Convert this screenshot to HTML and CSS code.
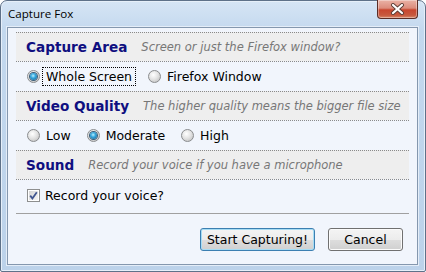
FILE: index.html
```html
<!DOCTYPE html>
<html>
<head>
<meta charset="utf-8">
<link rel="stylesheet" href="styles.css">
</head>
<body>
<div class="window">
  <div class="titlebar">
    <span class="title">Capture Fox</span>
    <div class="close">
      <svg width="15" height="12" viewBox="0 0 15 12">
        <path d="M3 2 L12 10 M12 2 L3 10" stroke="#5b3d36" stroke-width="4" stroke-linecap="round" fill="none"/>
        <path d="M3 2 L12 10 M12 2 L3 10" stroke="#ffffff" stroke-width="2.2" stroke-linecap="round" fill="none"/>
      </svg>
    </div>
  </div>
  <div class="client">
    <div class="sec-head">
      <span class="h">Capture Area</span>
      <span class="d">Screen or just the Firefox window?</span>
    </div>
    <div class="options">
      <div class="opt"><span class="radio on"><i></i></span><span class="lbl focus">Whole Screen</span></div>
      <div class="opt"><span class="radio"></span><span class="lbl">Firefox Window</span></div>
    </div>
    <div class="sec-head">
      <span class="h">Video Quality</span>
      <span class="d">The higher quality means the bigger file size</span>
    </div>
    <div class="options">
      <div class="opt"><span class="radio"></span><span class="lbl">Low</span></div>
      <div class="opt"><span class="radio on"><i></i></span><span class="lbl">Moderate</span></div>
      <div class="opt"><span class="radio"></span><span class="lbl">High</span></div>
    </div>
    <div class="sec-head">
      <span class="h">Sound</span>
      <span class="d">Record your voice if you have a microphone</span>
    </div>
    <div class="check-row">
      <span class="checkbox">
        <svg width="11" height="11" viewBox="0 0 11 11">
          <path d="M2.2 5.6 L4.4 8.4 L8.8 2.2" stroke="#40558f" stroke-width="1.8" fill="none"/>
        </svg>
      </span>
      <span class="lbl">Record your voice?</span>
    </div>
    <div class="sep"></div>
    <div class="buttons">
      <button class="btn default">Start Capturing!</button>
      <button class="btn cancel">Cancel</button>
    </div>
  </div>
</div>
</body>
</html>
```
FILE: styles.css
```css
html, body {
  margin: 0;
  padding: 0;
  background: #ffffff;
}
.window {
  width: 426px;
  height: 272px;
  box-sizing: border-box;
  border: 1px solid #5e7189;
  border-radius: 7px 7px 2px 2px;
  background: linear-gradient(to bottom, #d6e5f5 0, #c3d8ee 30px, #bcd2ea 100%);
  box-shadow: inset 0 0 0 1px #e6eff9;
  display: flex;
  flex-direction: column;
  font-family: "DejaVu Sans", Verdana, sans-serif;
}
.titlebar {
  height: 26px;
  display: flex;
  align-items: flex-start;
  padding: 0 7px 0 7px;
  flex: none;
}
.title {
  font-family: "Open Sans", "Noto Sans", sans-serif;
  font-size: 11.6px;
  color: #000;
  margin-top: 5px;
  line-height: 16px;
}
.close {
  margin-left: auto;
  margin-top: -1px;
  width: 41px;
  height: 19px;
  box-sizing: border-box;
  border: 1px solid #5a2d26;
  border-top: none;
  border-radius: 0 0 4px 4px;
  background: linear-gradient(to bottom, #eab2a6 0, #dc8c7c 45%, #c8462f 55%, #c75a3f 85%, #d98a6c 100%);
  box-shadow: inset 0 0 0 1px rgba(255,255,255,0.35);
  display: flex;
  align-items: center;
  justify-content: center;
}
.client {
  margin: 0 7px 0 6px;
  height: 238px;
  box-sizing: border-box;
  border: 1px solid #8497ae;
  box-shadow: 0 0 0 1px #e4edf8;
  background: #f1f5fc;
  padding: 4px 8px 0 8px;
  display: flex;
  flex-direction: column;
  flex: none;
}
.sec-head {
  border-top: 1px dotted #8a8a8a;
  height: 28px;
  background: #eeeeee;
  display: flex;
  align-items: center;
  padding-left: 10px;
  box-sizing: content-box;
}
.h {
  font-weight: bold;
  font-size: 13.6px;
  color: #0f0f80;
}
.d {
  margin-left: 14px;
  font-style: italic;
  font-size: 11.5px;
  color: #777777;
}
.options {
  border-top: 1px dotted #8a8a8a;
  height: 29px;
  display: flex;
  align-items: center;
  padding-left: 11px;
}
.opt {
  display: flex;
  align-items: center;
  margin-right: 12px;
}
.radio {
  width: 13px;
  height: 13px;
  box-sizing: border-box;
  border-radius: 50%;
  border: 1px solid #8a8c8e;
  background: radial-gradient(circle at 40% 35%, #ffffff 0, #e4e4e4 45%, #b9b9b9 100%);
  display: flex;
  align-items: center;
  justify-content: center;
  margin-right: 2px;
}
.radio i {
  width: 7px;
  height: 7px;
  border-radius: 50%;
  background: radial-gradient(circle at 45% 40%, #b8f0ff 0, #35a6dc 40%, #115a8c 100%);
  box-shadow: 0 0 0 1px #3a5d78;
}
.lbl {
  font-size: 12.5px;
  color: #000;
  border: 1px dotted transparent;
  padding: 1px 3px 1px 3px;
  line-height: 15px;
}
.lbl.focus {
  border-color: #000;
}
.check-row {
  border-top: 1px dotted #8a8a8a;
  height: 33px;
  display: flex;
  align-items: center;
  padding-left: 11px;
}
.check-row .lbl {
  padding-left: 5px;
  border: none;
  margin-top: -2px;
}
.checkbox {
  width: 13px;
  height: 13px;
  box-sizing: border-box;
  border: 1px solid #8e8f8f;
  background: linear-gradient(135deg, #cfcfcf 0, #eaeaea 60%, #f6f6f6 100%);
  box-shadow: inset 0 0 0 1px #ffffff;
  display: flex;
  align-items: center;
  justify-content: center;
  margin-top: -3px;
}
.sep {
  height: 1px;
  background: #a0a0a0;
  flex: none;
}
.buttons {
  display: flex;
  justify-content: flex-end;
  padding-top: 14px;
  padding-right: 6px;
  gap: 13px;
}
.btn {
  height: 23px;
  box-sizing: border-box;
  font-family: "DejaVu Sans", Verdana, sans-serif;
  font-size: 12.5px;
  color: #000;
  border: 1px solid #707070;
  border-radius: 3px;
  background: linear-gradient(to bottom, #f4f4f4 0, #ececec 50%, #dedede 50%, #d0d0d0 100%);
  box-shadow: inset 0 0 0 1px #fbfbfb;
  padding: 0;
  margin: 0;
}
.btn.default {
  width: 115px;
  border-color: #3c7fb1;
  box-shadow: inset 0 0 0 1px #a6dcf4;
}
.btn.cancel {
  width: 75px;
}
```
